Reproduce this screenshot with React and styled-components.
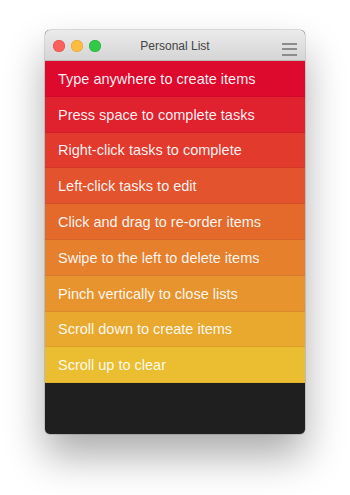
import React from "react";
import styled, { createGlobalStyle } from "styled-components";

const GlobalStyle = createGlobalStyle`
  html, body {
    margin: 0;
    padding: 0;
    background: #ffffff;
  }
  body {
    font-family: "Liberation Sans", Arial, sans-serif;
  }
`;

const Page = styled.div`
  width: 350px;
  height: 495px;
  display: flex;
  justify-content: center;
  align-items: flex-start;
  padding-top: 30px;
  box-sizing: border-box;
`;

const Window = styled.div`
  width: 260px;
  height: 404px;
  display: flex;
  flex-direction: column;
  border-radius: 5px;
  overflow: hidden;
  background: #1f1f1f;
  box-shadow: 0 22px 40px rgba(0, 0, 0, 0.33), 0 0 0 0.5px rgba(0, 0, 0, 0.25);
`;

const TitleBar = styled.div`
  height: 31px;
  flex: none;
  display: flex;
  align-items: center;
  position: relative;
  background: linear-gradient(#ebebeb, #d5d5d5);
  border-bottom: 1px solid #b9b9b9;
  box-sizing: border-box;
  padding: 0 8px;
`;

const Lights = styled.div`
  display: flex;
  gap: 6px;
  padding-top: 1px;
`;

const Light = styled.span`
  width: 12px;
  height: 12px;
  border-radius: 50%;
  background: ${(p) => p.color};
  box-shadow: inset 0 0 0 0.5px ${(p) => p.ring};
`;

const Title = styled.div`
  position: absolute;
  left: 0;
  right: 0;
  top: 9px;
  text-align: center;
  font-size: 12px;
  color: #434343;
  pointer-events: none;
`;

const Menu = styled.div`
  margin-left: auto;
  margin-top: 8px;
  display: flex;
  flex-direction: column;
  gap: 3.5px;

  span {
    display: block;
    width: 15px;
    height: 2px;
    background: #8c8c8c;
  }
`;

const List = styled.div`
  display: flex;
  flex-direction: column;
`;

const Row = styled.div`
  height: 35.8px;
  box-sizing: border-box;
  display: flex;
  align-items: center;
  padding-left: 13px;
  padding-top: 1px;
  background: ${(p) => p.bg};
  border-bottom: 1px solid rgba(0, 0, 0, 0.06);
  color: rgba(255, 255, 255, 0.94);
  font-size: 14.5px;
  white-space: nowrap;
`;

const items = [
  { text: "Type anywhere to create items", bg: "#dd0a2d" },
  { text: "Press space to complete tasks", bg: "#e0222e" },
  { text: "Right-click tasks to complete", bg: "#e23a2d" },
  { text: "Left-click tasks to edit", bg: "#e3532d" },
  { text: "Click and drag to re-order items", bg: "#e46a2c" },
  { text: "Swipe to the left to delete items", bg: "#e6802d" },
  { text: "Pinch vertically to close lists", bg: "#e8942e" },
  { text: "Scroll down to create items", bg: "#e9a82e" },
  { text: "Scroll up to clear", bg: "#ebbd30" },
];

const App = () => {
  return (
    <>
      <GlobalStyle />
      <Page>
        <Window>
          <TitleBar>
            <Lights>
              <Light color="#fc605c" ring="#de4a46" />
              <Light color="#fdbc40" ring="#dea033" />
              <Light color="#34c84a" ring="#27aa38" />
            </Lights>
            <Title>Personal List</Title>
            <Menu>
              <span />
              <span />
              <span />
            </Menu>
          </TitleBar>
          <List>
            {items.map((item) => (
              <Row key={item.text} bg={item.bg}>
                {item.text}
              </Row>
            ))}
          </List>
        </Window>
      </Page>
    </>
  );
};

export default App;
